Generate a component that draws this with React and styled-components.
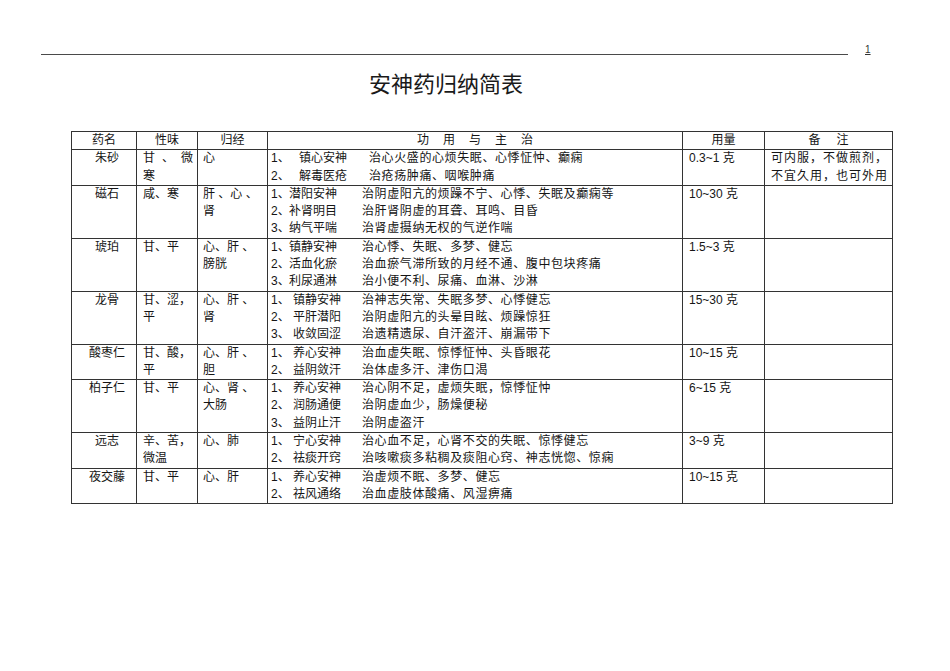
import React from "react";
import styled, { createGlobalStyle } from "styled-components";

const GlobalStyle = createGlobalStyle`
  html, body {
    margin: 0;
    padding: 0;
    background: #ffffff;
  }
  body {
    font-family: "Liberation Sans", "Noto Sans CJK SC", sans-serif;
    color: #151515;
  }
`;

const Page = styled.div`
  width: 950px;
  min-height: 671px;
  background: #ffffff;
  padding-top: 40px;
  box-sizing: border-box;
`;

const TopBar = styled.div`
  display: flex;
  align-items: flex-start;
  height: 20px;
  padding-left: 41px;
`;

const Rule = styled.div`
  width: 807px;
  height: 1px;
  margin-top: 14px;
  background: #4a4a4a;
`;

const PageNo = styled.span`
  margin-left: 17px;
  margin-top: 4px;
  font-size: 10px;
  line-height: 12px;
  text-decoration: underline;
  color: #333;
`;

const Title = styled.h1`
  margin: 11px 0 0 369px;
  font-family: "Noto Sans CJK SC", sans-serif;
  font-size: 22px;
  line-height: 22px;
  font-weight: 400;
  color: #1a1a1a;
`;

const Table = styled.table`
  margin: 38px 0 0 71px;
  border-collapse: collapse;
  table-layout: fixed;
  width: 821px;
  font-size: 12px;
  line-height: 17.3px;

  td, th {
    border: 1px solid #333;
    padding: 0;
    vertical-align: top;
    font-weight: 400;
  }
`;

const HeadCell = styled.th`
  text-align: center;
  letter-spacing: ${(p) => p.$spread || 0}px;
  padding-left: ${(p) => p.$spread || 0}px !important;
  white-space: nowrap;
`;

const Cell = styled.td`
  text-align: ${(p) => (p.$center ? "center" : "left")};
  letter-spacing: ${(p) => p.$track || 0}px;
  padding: 0 ${(p) => (p.$center ? 0 : 4)}px 0 ${(p) => p.$pad ?? 6}px !important;
`;

const Line = styled.div`
  height: 17.3px;
  white-space: nowrap;
`;

const Spread = styled.div`
  display: flex;
  justify-content: space-between;
  height: 17.3px;
`;

// number, herb action, indication; the action column starts further right on some rows
const UseLine = styled.div`
  display: grid;
  grid-template-columns: ${(p) => p.$num}px ${(p) => p.$descAt - 270 - p.$num}px 1fr;
  height: 17.3px;
  white-space: nowrap;
`;

const Desc = styled.span`
  letter-spacing: 0.6px;
`;

const rows = [
  {
    name: "朱砂",
    taste: [{ spread: "甘、微" }, "寒"],
    meridian: ["心"],
    num: 28,
    descAt: 368,
    uses: [
      ["1、", "镇心安神", "治心火盛的心烦失眠、心悸怔忡、癫痫"],
      ["2、", "解毒医疮", "治疮疡肿痛、咽喉肿痛"],
    ],
    dose: "0.3~1 克",
    note: ["可内服，不做煎剂，", "不宜久用，也可外用"],
  },
  {
    name: "磁石",
    taste: ["咸、寒"],
    meridian: ["肝 、心 、", "肾"],
    num: 18,
    uses: [
      ["1、", "潜阳安神", "治阴虚阳亢的烦躁不宁、心悸、失眠及癫痫等"],
      ["2、", "补肾明目", "治肝肾阴虚的耳聋、耳鸣、目昏"],
      ["3、", "纳气平喘", "治肾虚摄纳无权的气逆作喘"],
    ],
    dose: "10~30 克",
  },
  {
    name: "琥珀",
    taste: ["甘、平"],
    meridian: ["心、肝 、", "膀胱"],
    num: 18,
    uses: [
      ["1、", "镇静安神", "治心悸、失眠、多梦、健忘"],
      ["2、", "活血化瘀", "治血瘀气滞所致的月经不通、腹中包块疼痛"],
      ["3、", "利尿通淋", "治小便不利、尿痛、血淋、沙淋"],
    ],
    dose: "1.5~3 克",
  },
  {
    name: "龙骨",
    taste: ["甘、涩，", "平"],
    meridian: ["心、肝 、", "肾"],
    uses: [
      ["1、", "镇静安神", "治神志失常、失眠多梦、心悸健忘"],
      ["2、", "平肝潜阳", "治阴虚阳亢的头晕目眩、烦躁惊狂"],
      ["3、", "收敛固涩", "治遗精遗尿、自汗盗汗、崩漏带下"],
    ],
    dose: "15~30 克",
  },
  {
    name: "酸枣仁",
    taste: ["甘、酸，", "平"],
    meridian: ["心、肝 、", "胆"],
    uses: [
      ["1、", "养心安神", "治血虚失眠、惊悸怔忡、头昏眼花"],
      ["2、", "益阴敛汗", "治体虚多汗、津伤口渴"],
    ],
    dose: "10~15 克",
  },
  {
    name: "柏子仁",
    taste: ["甘、平"],
    meridian: ["心、肾 、", "大肠"],
    uses: [
      ["1、", "养心安神", "治心阴不足，虚烦失眠，惊悸怔忡"],
      ["2、", "润肠通便", "治阴虚血少，肠燥便秘"],
      ["3、", "益阴止汗", "治阴虚盗汗"],
    ],
    dose: "6~15 克",
  },
  {
    name: "远志",
    taste: ["辛、苦，", "微温"],
    meridian: ["心、肺"],
    uses: [
      ["1、", "宁心安神", "治心血不足，心肾不交的失眠、惊悸健忘"],
      ["2、", "祛痰开窍", "治咳嗽痰多粘稠及痰阻心窍、神志恍惚、惊痫"],
    ],
    dose: "3~9 克",
  },
  {
    name: "夜交藤",
    taste: ["甘、平"],
    meridian: ["心、肝"],
    uses: [
      ["1、", "养心安神", "治虚烦不眠、多梦、健忘"],
      ["2、", "祛风通络", "治血虚肢体酸痛、风湿痹痛"],
    ],
    dose: "10~15 克",
  },
];

function Lines({ items }) {
  return items.map((t, i) =>
    typeof t === "string" ? (
      <Line key={i}>{t}</Line>
    ) : (
      <Spread key={i}>
        {[...t.spread].map((c, j) => (
          <span key={j}>{c}</span>
        ))}
      </Spread>
    )
  );
}

export default function App() {
  return (
    <Page>
      <GlobalStyle />
      <TopBar>
        <Rule />
        <PageNo>1</PageNo>
      </TopBar>
      <Title>安神药归纳简表</Title>
      <Table>
        <colgroup>
          <col style={{ width: 65 }} />
          <col style={{ width: 61 }} />
          <col style={{ width: 70 }} />
          <col style={{ width: 415 }} />
          <col style={{ width: 82 }} />
          <col style={{ width: 128 }} />
        </colgroup>
        <thead>
          <tr>
            <HeadCell>药名</HeadCell>
            <HeadCell>性味</HeadCell>
            <HeadCell>归经</HeadCell>
            <HeadCell $spread={14}>功用与主治</HeadCell>
            <HeadCell>用量</HeadCell>
            <HeadCell $spread={16}>备注</HeadCell>
          </tr>
        </thead>
        <tbody>
          {rows.map((r) => (
            <tr key={r.name}>
              <Cell $center>{r.name}</Cell>
              <Cell>
                <Lines items={r.taste} />
              </Cell>
              <Cell $pad={5}>
                <Lines items={r.meridian} />
              </Cell>
              <Cell $pad={3}>
                {r.uses.map(([n, k, d]) => (
                  <UseLine key={n} $num={r.num ?? 22} $descAt={r.descAt ?? 361}>
                    <span>{n}</span>
                    <span>{k}</span>
                    <Desc>{d}</Desc>
                  </UseLine>
                ))}
              </Cell>
              <Cell>{r.dose}</Cell>
              <Cell $track={1}>
                <Lines items={r.note || []} />
              </Cell>
            </tr>
          ))}
        </tbody>
      </Table>
    </Page>
  );
}
